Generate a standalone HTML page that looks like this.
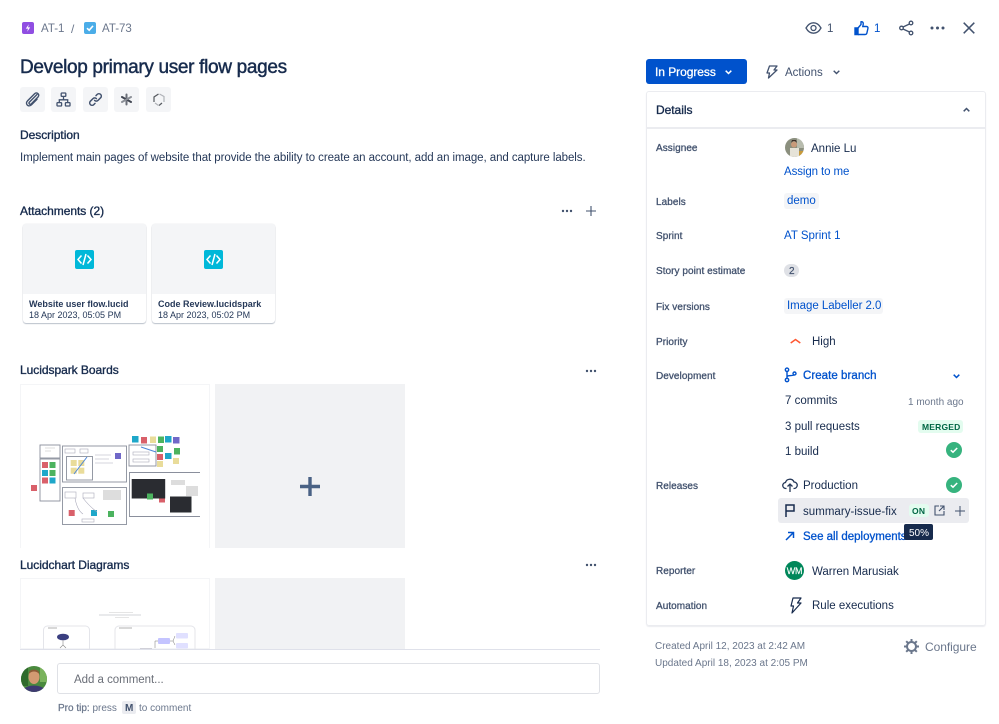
<!DOCTYPE html>
<html><head><meta charset="utf-8"><style>
html,body{margin:0;padding:0;background:#fff}
#p{position:relative;width:999px;height:724px;overflow:hidden;background:#fff;font-family:"Liberation Sans",sans-serif;font-size:12px;color:#253858}
.t{position:absolute;white-space:nowrap;line-height:16px;margin-top:-7px}
.m{font-weight:normal;-webkit-text-stroke:.3px}
.b{color:#172b4d;font-size:12px;font-weight:normal;-webkit-text-stroke:.35px;margin-top:-8px;letter-spacing:-.04px}
.l{font-size:10px;-webkit-text-stroke:.3px;letter-spacing:.05px;color:#42526e;left:656px;margin-top:-6px}
.s{margin-top:-6px}
.v{left:785px;color:#172b4d}
.a{color:#0052cc}
.r{position:absolute}
svg{position:absolute;overflow:visible}
</style></head><body><div id="p">

<!-- breadcrumb -->
<svg style="left:22px;top:22px" width="12" height="12" viewBox="0 0 12 12"><rect width="12" height="12" rx="2" fill="#904ee2"/><path d="M6.800 2.200 3.800 6.600H6L5.200 9.800 8.200 5.400H6z" fill="#fff"/></svg>
<span class="t" style="left:41px;top:28px;color:#6b778c;font-size:11.500px">AT-1</span>
<span class="t" style="left:71px;top:28px;color:#6b778c;font-size:12px">/</span>
<svg style="left:84px;top:22px" width="12" height="12" viewBox="0 0 12 12"><rect width="12" height="12" rx="2" fill="#4bade8"/><path d="M3 6.200 5.200 8.200 9 3.900" fill="none" stroke="#fff" stroke-width="1.600"/></svg>
<span class="t" style="left:102px;top:28px;color:#6b778c;font-size:11.500px">AT-73</span>

<span class="t" style="left:20px;top:68px;font-size:19px;-webkit-text-stroke:.45px;letter-spacing:-.32px;color:#172b4d;line-height:24px;margin-top:-12px">Develop primary user flow pages</span>

<!-- icon buttons -->
<div class="r" style="left:20px;top:87px;width:25px;height:25px;background:#f4f5f7;border-radius:3px"></div>
<div class="r" style="left:51px;top:87px;width:25px;height:25px;background:#f4f5f7;border-radius:3px"></div>
<div class="r" style="left:83px;top:87px;width:25px;height:25px;background:#f4f5f7;border-radius:3px"></div>
<div class="r" style="left:114px;top:87px;width:25px;height:25px;background:#f4f5f7;border-radius:3px"></div>
<div class="r" style="left:146px;top:87px;width:25px;height:25px;background:#f4f5f7;border-radius:3px"></div>
<svg style="left:25px;top:92px" width="15" height="15" viewBox="0 0 15 15" fill="none" stroke="#42526e" stroke-width="1.400" stroke-linecap="round"><path d="M12 2.500 4.400 10.100a1.300 1.300 0 0 0 1.900 1.800L13 5c1.300-1.400.7-2.800 0-3.400-.8-.8-2.300-1-3.400.1L2.600 8.800c-1.800 1.900-1 3.700-.2 4.400.9.8 2.600 1.100 4.100-.4L12 7.300"/></svg>
<svg style="left:56px;top:92px" width="15" height="15" viewBox="0 0 15 15" fill="none" stroke="#42526e" stroke-width="1.300"><rect x="5.200" y="1" width="4.600" height="3.400" rx=".6"/><rect x="1" y="10.600" width="4.600" height="3.400" rx=".6"/><rect x="9.400" y="10.600" width="4.600" height="3.400" rx=".6"/><path d="M7.500 4.400v3.400M3.300 10.600V7.800h8.400v2.800"/></svg>
<svg style="left:88px;top:92px" width="15" height="15" viewBox="0 0 15 15" fill="none" stroke="#42526e" stroke-width="1.500" stroke-linecap="round"><path d="M6.600 8.400a2.400 2.400 0 0 0 3.400 0l2.600-2.600a2.400 2.400 0 0 0-3.400-3.400L8 3.600"/><path d="M8.400 6.600a2.400 2.400 0 0 0-3.400 0L2.400 9.200a2.400 2.400 0 0 0 3.400 3.400L7 11.400"/></svg>
<svg style="left:120px;top:93px" width="13" height="13" viewBox="0 0 13 13" stroke-width="2" stroke-linecap="round"><path d="M6.500 1.500v10" stroke="#6a6e78"/><path d="M2 4l9 5" stroke="#3f4450"/><path d="M11 4 2 9" stroke="#8a8e96"/></svg>
<svg style="left:153px;top:93px" width="12" height="13" viewBox="0 0 12 13" fill="none" stroke-width="1.200"><path d="M1 9V4L5.500 1" stroke="#55595f"/><path d="M6.500 1 11 3.500V9" stroke="#b0b3b8"/><path d="M2 10l3.500 2.500" stroke="#b0b3b8"/><path d="M6 12.500 9 10" stroke="#55595f"/></svg>

<span class="t b" style="left:20px;top:135px">Description</span>
<span class="t" style="left:20px;top:157px;font-size:11.500px;letter-spacing:-.07px">Implement main pages of website that provide the ability to create an account, add an image, and capture labels.</span>

<span class="t b" style="left:20px;top:211px">Attachments (2)</span>
<svg style="left:561px;top:209px" width="12" height="4" fill="#42526e"><circle cx="2" cy="2" r="1.200"/><circle cx="6" cy="2" r="1.200"/><circle cx="10" cy="2" r="1.200"/></svg>
<svg style="left:586px;top:206px" width="10" height="10" stroke="#42526e" stroke-width="1.100"><path d="M5 0v10M0 5h10"/></svg>

<!-- cards -->
<div class="r" style="left:23px;top:224px;width:123px;height:99px;background:#fff;border-radius:3px;box-shadow:0 1px 1px rgba(9,30,66,.25),0 0 1px rgba(9,30,66,.2);overflow:hidden"><div style="height:70px;background:#f4f5f7"></div></div>
<div class="r" style="left:152px;top:224px;width:123px;height:99px;background:#fff;border-radius:3px;box-shadow:0 1px 1px rgba(9,30,66,.25),0 0 1px rgba(9,30,66,.2);overflow:hidden"><div style="height:70px;background:#f4f5f7"></div></div>
<svg style="left:75px;top:250px" width="19" height="19" viewBox="0 0 19 19"><rect width="19" height="19" rx="2" fill="#00b8d9"/><path d="M6.500 5.500 3 9.500l3.500 4M12.500 5.500 16 9.500l-3.500 4M11 4 8 15" fill="none" stroke="#fff" stroke-width="1.500"/></svg>
<svg style="left:204px;top:250px" width="19" height="19" viewBox="0 0 19 19"><rect width="19" height="19" rx="2" fill="#00b8d9"/><path d="M6.500 5.500 3 9.500l3.500 4M12.500 5.500 16 9.500l-3.500 4M11 4 8 15" fill="none" stroke="#fff" stroke-width="1.500"/></svg>
<span class="t" style="left:29px;top:303px;font-size:9px;font-weight:bold;color:#253858">Website user flow.lucid</span>
<span class="t" style="left:29px;top:314px;font-size:9px">18 Apr 2023, 05:05 PM</span>
<span class="t" style="left:158px;top:303px;font-size:9px;font-weight:bold;color:#253858">Code Review.lucidspark</span>
<span class="t" style="left:158px;top:314px;font-size:9px">18 Apr 2023, 05:02 PM</span>

<!-- Lucidspark -->
<span class="t b" style="left:20px;top:370px">Lucidspark Boards</span>
<svg style="left:585px;top:369px" width="12" height="4" fill="#42526e"><circle cx="2" cy="2" r="1.200"/><circle cx="6" cy="2" r="1.200"/><circle cx="10" cy="2" r="1.200"/></svg>
<div class="r" style="left:20px;top:384px;width:190px;height:164px;border:1px solid #f4f5f7;border-bottom:0;box-sizing:border-box"></div>
<div class="r" style="left:215px;top:384px;width:190px;height:164px;background:#f1f2f4"></div>
<svg style="left:300px;top:477px" width="20" height="20" stroke="#4a6285" stroke-width="3.400"><path d="M10 0v19M0 9.500h20"/></svg>
<svg style="left:10px;top:380px;filter:blur(.35px)" width="205" height="175" viewBox="0 0 205 175">
<g fill="#fff" stroke="#8a8f9c" stroke-width=".9"><rect x="30" y="65" width="20" height="13"/><rect x="30" y="79" width="20" height="42"/><rect x="52.500" y="66" width="64" height="36"/><rect x="56.500" y="76.500" width="26" height="23.500"/><rect x="119" y="65" width="27" height="21"/><rect x="52.500" y="107.500" width="64" height="37"/><path d="M190 92.500H119.500V136.500H190"/></g>
<g fill="#d9606a"><rect x="32" y="82" width="6" height="6"/><rect x="32" y="97.500" width="6" height="6"/><rect x="21" y="105" width="6" height="6"/><rect x="131" y="57" width="6" height="6.500"/><rect x="149" y="116" width="6" height="6.500"/><rect x="58.700" y="130" width="6" height="6"/><rect x="147" y="74" width="6" height="6"/></g>
<g fill="#4cb35f"><rect x="39.500" y="82" width="6" height="6"/><rect x="39.500" y="90" width="6" height="6"/><rect x="148" y="56.500" width="6" height="6.500"/><rect x="147" y="66" width="6" height="6"/><rect x="164" y="68" width="6" height="6.500"/><rect x="98" y="131" width="6" height="6"/></g>
<g fill="#1ea7c9"><rect x="32" y="90" width="6" height="6"/><rect x="39.500" y="97.500" width="6" height="6"/><rect x="122" y="56" width="6.500" height="6.500"/><rect x="155" y="73" width="6.500" height="6"/><rect x="155" y="56" width="6.500" height="6.500"/><rect x="81" y="130" width="6" height="6"/></g>
<g fill="#e9dc9a"><rect x="60.700" y="80" width="6" height="6"/><rect x="68.300" y="80" width="6" height="6"/><rect x="60.700" y="87.700" width="6" height="6"/><rect x="68.300" y="87.700" width="6" height="6"/><rect x="140" y="56.500" width="6" height="6.500"/><rect x="147" y="81" width="6" height="6"/><rect x="163" y="78" width="6" height="6"/></g>
<g fill="#7068c8"><rect x="105" y="73" width="6" height="6"/><rect x="163" y="57" width="6.500" height="6.500"/></g>
<rect x="121.700" y="99" width="33.500" height="19.500" fill="#2a2c31"/><rect x="160" y="116.500" width="21.500" height="16" fill="#2a2c31"/>
<rect x="137" y="113.500" width="6" height="6" fill="#4cb35f"/>
<g stroke="#4d86d8" fill="none"><path d="M64 94 77 77M131 67l15 5"/></g>
<g fill="none" stroke="#aab" stroke-width=".6"><rect x="55" y="112" width="11" height="6"/><rect x="73" y="113" width="11" height="5"/><rect x="72" y="139" width="12" height="3"/><rect x="123" y="72" width="16" height="3"/><rect x="123" y="79" width="16" height="3"/><rect x="55" y="69" width="10" height="4"/><rect x="70" y="69" width="8" height="4"/><path d="M85 75h16M85 79h14M85 83h18"/><path d="M65 118q2 12 8 16M73 118q6 8 14 14"/></g>
<g fill="#ddd"><rect x="93" y="110" width="18" height="10"/><rect x="161" y="100" width="14" height="5"/><rect x="176" y="106" width="12" height="10"/></g>
<path d="M35 68h10M35 71h6" stroke="#bbb" stroke-width=".6"/>
</svg>

<!-- Lucidchart -->
<span class="t b" style="left:20px;top:565px">Lucidchart Diagrams</span>
<svg style="left:585px;top:563px" width="12" height="4" fill="#42526e"><circle cx="2" cy="2" r="1.200"/><circle cx="6" cy="2" r="1.200"/><circle cx="10" cy="2" r="1.200"/></svg>
<div class="r" style="left:20px;top:578px;width:190px;height:71px;border:1px solid #f4f5f7;box-sizing:border-box"></div>
<div class="r" style="left:215px;top:578px;width:190px;height:71px;background:#f1f2f4"></div>
<svg style="left:20px;top:578px" width="190" height="71" viewBox="0 0 190 71" fill="none">
<path d="M79 37h42" stroke="#c4c6cc" stroke-width=".8"/><path d="M89 34.500h24M95 39.500h14" stroke="#ddd" stroke-width=".8"/>
<path d="M23.500 71V52a4 4 0 0 1 4-4h38a4 4 0 0 1 4 4v19M95 71V52a4 4 0 0 1 4-4h72a4 4 0 0 1 4 4v19" stroke="#e4e5ea"/>
<path d="M28 50h9M99 50h13" stroke="#999" stroke-width=".8"/>
<ellipse cx="43" cy="59" rx="6" ry="3.300" fill="#3a3f80"/><path d="M43 62v5l-3 3M43 67l3 3" stroke="#888" stroke-width=".6"/>
<rect x="138" y="60" width="12" height="6" rx="1" fill="#c4c4ff"/><rect x="156" y="55" width="12" height="5.500" rx="1" fill="#e0e0ff"/><rect x="156" y="65" width="12" height="5.500" rx="1" fill="#e0e0ff"/>
<path d="M138 63h-3v7M150 63h3l2-5M153 63l2 4" stroke="#777" stroke-width=".5"/><path d="M120 70.500h12" stroke="#d0d0d8"/>
</svg>
<div class="r" style="left:0;top:649px;width:600px;height:75px;background:#fff"></div>
<div class="r" style="left:20px;top:649px;width:580px;height:1px;background:#dfe1ea"></div>

<!-- comment -->
<svg style="left:21px;top:666px" width="26" height="26" viewBox="0 0 26 26"><defs><clipPath id="c1"><circle cx="13" cy="13" r="13"/></clipPath></defs><g clip-path="url(#c1)"><rect width="26" height="26" fill="#4a8a3e"/><rect x="0" y="0" width="7" height="20" fill="#2f6a2c"/><rect x="19" y="0" width="7" height="16" fill="#7ab35c"/><ellipse cx="13" cy="11" rx="5.500" ry="7" fill="#d29a72"/><path d="M7.500 8q5.500-5 11 0l-1-3q-4.500-3-9 0z" fill="#8a5a36"/><path d="M2 26v-3q5-3.500 11-3.500T24 23v3z" fill="#3d3a70"/></g></svg>
<div class="r" style="left:57px;top:663px;width:543px;height:31px;border:1px solid #dfe1e6;border-radius:3px;box-sizing:border-box"></div>
<span class="t" style="left:74px;top:679px;color:#6b6f78;font-size:11.500px;letter-spacing:-.03px">Add a comment...</span>
<span class="t s" style="left:58px;top:707px;font-size:10px;color:#6b778c"><span class="m" style="-webkit-text-stroke:.25px">Pro tip:</span> press</span>
<div class="r" style="left:122px;top:701px;width:14px;height:13px;background:#ebecf0;border-radius:2px"></div>
<span class="t s" style="left:125px;top:707px;font-size:10px;font-weight:bold;color:#42526e">M</span>
<span class="t s" style="left:139px;top:707px;font-size:10px;color:#6b778c">to comment</span>

<!-- top right -->
<svg style="left:805px;top:20px" width="17" height="16" viewBox="0 0 17 16" fill="none" stroke="#42526e" stroke-width="1.300"><path d="M1 8c2-3.600 4.500-5.200 7.500-5.200S14 4.400 16 8c-2 3.600-4.500 5.200-7.500 5.200S3 11.600 1 8z"/><circle cx="8.500" cy="8" r="2.500"/></svg>
<span class="t" style="left:827px;top:28px;font-size:11.500px;color:#42526e">1</span>
<svg style="left:854px;top:20px" width="15" height="16" viewBox="0 0 15 16" fill="none" stroke="#0052cc" stroke-width="1.400"><path d="M1 8h3v6.500H1z" fill="#0052cc"/><path d="M4 8l3-3.500V1.800c1.800-.5 2.500 1 2.200 2.600L8.800 6.500h3.700c1.200 0 1.700 1 1.400 2l-1 4.500c-.2 1-.9 1.500-1.800 1.500H4"/></svg>
<span class="t a" style="left:874px;top:28px;font-size:11.500px">1</span>
<svg style="left:899px;top:20px" width="15" height="16" viewBox="0 0 15 16" fill="none" stroke="#42526e" stroke-width="1.300"><circle cx="12" cy="3" r="1.800"/><circle cx="12" cy="13" r="1.800"/><circle cx="2.500" cy="8" r="1.800"/><path d="M4 7 10.500 4M4 9l6.500 3"/></svg>
<svg style="left:930px;top:26px" width="15" height="4" fill="#42526e"><circle cx="2" cy="2" r="1.500"/><circle cx="7.500" cy="2" r="1.500"/><circle cx="13" cy="2" r="1.500"/></svg>
<svg style="left:963px;top:22px" width="12" height="12" stroke="#42526e" stroke-width="1.500"><path d="M.7.7l10.600 10.600M11.300.7.700 11.300"/></svg>

<!-- status -->
<div class="r" style="left:646px;top:59px;width:101px;height:25px;background:#0052cc;border-radius:3px"></div>
<span class="t" style="left:655px;top:72px;font-size:12px;-webkit-text-stroke:.3px;letter-spacing:-.05px;color:#fff;margin-top:-8px">In Progress</span>
<svg style="left:725px;top:70px" width="7" height="5" fill="none" stroke="#fff" stroke-width="1.500"><path d="M.7.7 3.500 3.500 6.300.7"/></svg>
<svg style="left:766px;top:65px" width="12" height="14" viewBox="0 0 12 14" fill="none" stroke="#42526e" stroke-width="1.300" stroke-linejoin="round"><path d="M3.500 1h7.500L8 5h3L2.500 13 3.500 8H1z"/></svg>
<span class="t" style="left:785px;top:72px;font-size:11.500px;color:#42526e">Actions</span>
<svg style="left:833px;top:70px" width="7" height="5" fill="none" stroke="#42526e" stroke-width="1.400"><path d="M.7.7 3.500 3.500 6.300.7"/></svg>

<!-- panel -->
<div class="r" style="left:646px;top:91px;width:340px;height:535px;border:1px solid #ebecf0;border-radius:3px;box-sizing:border-box;box-shadow:0 1px 1px #ebecf0"></div>
<div class="r" style="left:647px;top:127px;width:338px;height:2px;background:#ebecf0"></div>
<span class="t b" style="left:656px;top:110px">Details</span>
<svg style="left:963px;top:107px" width="7" height="5" fill="none" stroke="#42526e" stroke-width="1.500"><path d="M.7 4.300 3.500 1.500 6.300 4.300"/></svg>

<span class="t l" style="top:147px">Assignee</span>
<svg style="left:785px;top:138px" width="19" height="19" viewBox="0 0 19 19"><defs><clipPath id="c2"><circle cx="9.500" cy="9.500" r="9.500"/></clipPath></defs><g clip-path="url(#c2)"><rect width="19" height="19" fill="#8b8f7e"/><rect x="12" width="7" height="10" fill="#b8bcae"/><circle cx="9" cy="6.500" r="3" fill="#c89a7a"/><path d="M6 5q3-4 6 0l-1-3H7z" fill="#3d2e28"/><rect x="5" y="10" width="9" height="9" fill="#e6e3d8"/><rect x="14" y="13" width="5" height="6" fill="#c89a3a"/></g></svg>
<span class="t v" style="left:811px;top:148px;font-size:11.500px">Annie Lu</span>
<span class="t a" style="left:784px;top:171px;font-size:11.500px;letter-spacing:-.1px">Assign to me</span>

<span class="t l" style="top:201px">Labels</span>
<div class="r" style="left:784px;top:193px;width:35px;height:16px;background:#f4f5f7;border-radius:3px"></div>
<span class="t a" style="left:787px;top:200px;font-size:11.500px">demo</span>

<span class="t l" style="top:235px">Sprint</span>
<span class="t a" style="left:784px;top:235px;font-size:11.500px">AT Sprint 1</span>

<span class="t l" style="top:270px">Story point estimate</span>
<div class="r" style="left:784px;top:264px;width:15px;height:13px;background:#dfe1e6;border-radius:7px"></div>
<span class="t s" style="left:789px;top:270px;font-size:10px;-webkit-text-stroke:.2px;color:#42526e">2</span>

<span class="t l" style="top:306px">Fix versions</span>
<div class="r" style="left:784px;top:298px;width:99px;height:16px;background:#f4f5f7;border-radius:3px"></div>
<span class="t a" style="left:787px;top:305px;font-size:11.500px;letter-spacing:-.05px">Image Labeller 2.0</span>

<span class="t l" style="top:341px">Priority</span>
<svg style="left:790px;top:338px" width="11" height="6" fill="none" stroke="#ff5630" stroke-width="1.500"><path d="M.7 5 5.500 1.500 10.300 5"/></svg>
<span class="t v" style="left:812px;top:341px;font-size:11.500px">High</span>

<span class="t l" style="top:375px">Development</span>
<svg style="left:784px;top:367px" width="13" height="16" viewBox="0 0 13 16" fill="none" stroke="#0052cc" stroke-width="1.400"><circle cx="3" cy="2.800" r="1.700"/><circle cx="3" cy="13" r="1.700"/><circle cx="10.500" cy="6.500" r="1.500"/><path d="M3 4.500v6.800M3 10c0-2.500 7-.5 7.500-2.500"/></svg>
<span class="t a m" style="left:803px;top:375px;font-size:11.500px;letter-spacing:.05px">Create branch</span>
<svg style="left:953px;top:374px" width="7" height="5" fill="none" stroke="#0052cc" stroke-width="1.500"><path d="M.7.7 3.500 3.500 6.300.7"/></svg>
<span class="t v" style="left:785px;top:400px;font-size:11.500px">7 commits</span>
<span class="t s" style="left:908px;top:401px;font-size:10px;color:#6b778c">1 month ago</span>
<span class="t v" style="left:785px;top:426px;font-size:11.500px">3 pull requests</span>
<div class="r" style="left:918px;top:420px;width:45px;height:13px;background:#e3fcef;border-radius:3px"></div>
<span class="t" style="left:922px;top:426px;font-size:8.500px;font-weight:bold;color:#006644;letter-spacing:.2px">MERGED</span>
<span class="t v" style="left:785px;top:451px;font-size:11.500px">1 build</span>
<svg style="left:946px;top:442px" width="16" height="16" viewBox="0 0 16 16"><circle cx="8" cy="8" r="8" fill="#36b37e"/><path d="M4.800 8.200 7 10.200 11.200 6" fill="none" stroke="#fff" stroke-width="1.500"/></svg>

<span class="t l" style="top:485px">Releases</span>
<svg style="left:782px;top:477px" width="16" height="16" viewBox="0 0 16 16" fill="none" stroke="#253858" stroke-width="1.300"><path d="M4.500 11.500H4a3 3 0 0 1-.5-6A4.500 4.500 0 0 1 12 5a3.200 3.200 0 0 1 0 6.500h-.5"/><path d="M8 15V7.500M5.500 9.500 8 7l2.500 2.500"/></svg>
<span class="t v" style="left:803px;top:485px;font-size:11.500px">Production</span>
<svg style="left:946px;top:477px" width="16" height="16" viewBox="0 0 16 16"><circle cx="8" cy="8" r="8" fill="#36b37e"/><path d="M4.800 8.200 7 10.200 11.200 6" fill="none" stroke="#fff" stroke-width="1.500"/></svg>
<div class="r" style="left:778px;top:498px;width:191px;height:25px;background:#ebecf0;border-radius:3px"></div>
<svg style="left:785px;top:504px" width="11" height="13" fill="none" stroke="#172b4d" stroke-width="1.500"><path d="M1 13V1h8v6H1"/></svg>
<span class="t v" style="left:803px;top:511px;font-size:11.500px;letter-spacing:.03px">summary-issue-fix</span>
<div class="r" style="left:909px;top:504px;width:20px;height:13px;background:#e3fcef;border-radius:3px"></div>
<span class="t" style="left:912px;top:510px;font-size:8.500px;font-weight:bold;color:#006644;letter-spacing:.3px">ON</span>
<svg style="left:934px;top:505px" width="11" height="11" fill="none" stroke="#42526e" stroke-width="1.100"><path d="M5 1H1v9h9V6M6 1h4v4M10 1 5 6"/></svg>
<svg style="left:955px;top:506px" width="10" height="10" stroke="#42526e" stroke-width="1"><path d="M5 0v10M0 5h10"/></svg>
<svg style="left:785px;top:531px" width="10" height="10" fill="none" stroke="#0052cc" stroke-width="1.500"><path d="M1 9 8.500 1.500M3 1.500h5.500V7"/></svg>
<span class="t a m" style="left:803px;top:536px;font-size:11.500px">See all deployments</span>
<div class="r" style="left:904px;top:524px;width:29px;height:16px;background:#172b4d;border-radius:2px"></div>
<span class="t s" style="left:909px;top:532px;font-size:10px;color:#fff">50%</span>

<span class="t l" style="top:570px">Reporter</span>
<div class="r" style="left:785px;top:561px;width:19px;height:19px;background:#00875a;border-radius:50%;color:#fff;font-size:9px;-webkit-text-stroke:.15px;letter-spacing:-.2px;text-align:center;line-height:20px">WM</div>
<span class="t v" style="left:812px;top:571px;font-size:11.500px;letter-spacing:-.03px">Warren Marusiak</span>

<span class="t l" style="top:605px">Automation</span>
<svg style="left:790px;top:597px" width="12" height="17" viewBox="0 0 12 17" fill="none" stroke="#172b4d" stroke-width="1.200" stroke-linejoin="round"><path d="M3 1h8L7.500 6H11L2 16l1.500-7H1z"/></svg>
<span class="t v" style="left:812px;top:605px;font-size:11.500px">Rule executions</span>

<span class="t s" style="left:655px;top:645px;font-size:10px;color:#6b778c">Created April 12, 2023 at 2:42 AM</span>
<span class="t s" style="left:655px;top:662px;font-size:10px;color:#6b778c">Updated April 18, 2023 at 2:05 PM</span>
<svg style="left:904px;top:639px" width="15" height="15" viewBox="0 0 15 15" fill="none" stroke="#6b778c"><circle cx="7.500" cy="7.500" r="4.500" stroke-width="2"/><path d="M7.500 0v3M7.500 12v3M0 7.500h3M12 7.500h3M2.200 2.200l2 2M10.800 10.800l2 2M12.800 2.200l-2 2M4.200 10.800l-2 2" stroke-width="2"/></svg>
<span class="t" style="left:925px;top:647px;font-size:12px;letter-spacing:-.05px;color:#6b778c;margin-top:-8px">Configure</span>

</div></body></html>
